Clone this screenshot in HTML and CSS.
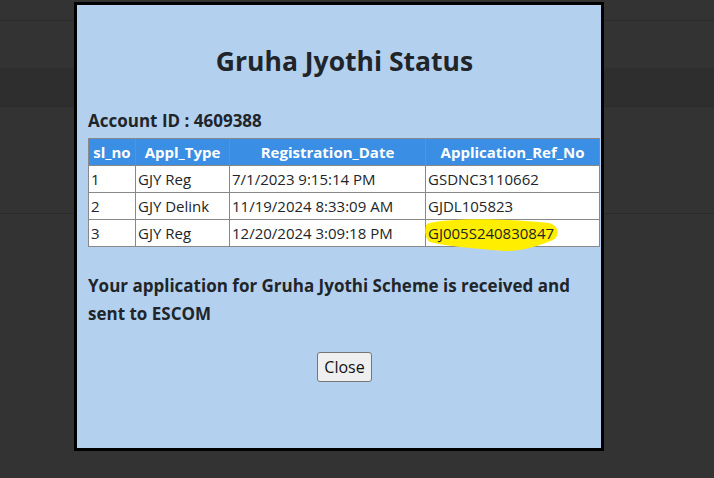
FILE: index.html
```html
<!DOCTYPE html>
<html>
<head>
<meta charset="utf-8">
<link rel="stylesheet" href="styles.css">
</head>
<body>
<div class="page">
  <div class="bar-top"></div>
  <div class="bar-nav"></div>
  <div class="bar-sub"></div>
  <div class="bar-rest"></div>
</div>
<div class="modal">
  <h2 class="title">Gruha Jyothi Status</h2>
  <h4 class="account">Account ID : 4609388</h4>
  <table class="status">
    <thead>
      <tr><th class="c1">sl_no</th><th class="c2">Appl_Type</th><th class="c3">Registration_Date</th><th class="c4">Application_Ref_No</th></tr>
    </thead>
    <tbody>
      <tr><td>1</td><td>GJY Reg</td><td>7/1/2023 9:15:14 PM</td><td>GSDNC3110662</td></tr>
      <tr><td>2</td><td>GJY Delink</td><td>11/19/2024 8:33:09 AM</td><td>GJDL105823</td></tr>
      <tr><td>3</td><td>GJY Reg</td><td>12/20/2024 3:09:18 PM</td><td class="marked"><svg class="marker" viewBox="0 0 138 34" preserveAspectRatio="none"><path d="M3 6 C20 0 80 0 125 5 C134 7 137 17 129 22 C115 28 95 34 80 33 C55 31 20 28 6 24 C1 21 0 10 3 6 Z" fill="#ffee00"/></svg><span class="ref">GJ005S240830847</span></td></tr>
    </tbody>
  </table>
  <h4 class="message">Your application for Gruha Jyothi Scheme is received and sent to ESCOM</h4>
  <div class="actions"><button class="close">Close</button></div>
</div>
</body>
</html>
```

FILE: styles.css
```css
html, body {
  margin: 0;
  padding: 0;
  background: #333333;
  font-family: "Open Sans", "Noto Sans", sans-serif;
}
.page {
  height: 478px;
  display: flex;
  flex-direction: column;
}
.bar-top {
  height: 20px;
  border-bottom: 1px solid #2b2b2b;
}
.bar-nav {
  height: 47px;
  border-bottom: 1px solid #2f2f2f;
}
.bar-sub {
  height: 37px;
  background: #2e2e2e;
  border-bottom: 1px solid #2a2a2a;
}
.bar-rest {
  height: 106px;
  border-bottom: 1px solid #2b2b2b;
}
.modal {
  position: absolute;
  left: 74px;
  top: 2px;
  width: 513px;
  height: 443px;
  border: 3px solid #000;
  background: #b3d1ef;
  padding: 0 0 0 11px;
  color: #212529;
}
.title {
  margin: 35px 0 0 0;
  text-align: center;
  font-size: 26.5px;
  line-height: 42px;
  font-weight: 700;
}
.account {
  margin: 27px 0 0 0;
  font-size: 17px;
  line-height: 24px;
  font-weight: 700;
}
.status {
  margin-top: 5px;
  width: 512px;
  border-collapse: collapse;
  font-size: 15px;
  background: #fff;
}
.status th, .status td {
  border: 1px solid #888;
  height: 26px;
  padding: 0 2px;
  text-align: left;
}
.status th {
  background: #3a8ee4;
  color: #fff;
  font-weight: 700;
  text-align: center;
  border-color: #888;
}
.c1 { width: 42px; }
.c2 { width: 89px; }
.c3 { width: 191px; }
.marked {
  position: relative;
}
.marker {
  position: absolute;
  left: -2px;
  top: -2px;
  width: 138px;
  height: 34px;
}
.ref {
  position: relative;
}
.message {
  margin: 25px 0 0 0;
  font-size: 17px;
  line-height: 28px;
  font-weight: 700;
  padding-right: 20px;
}
.actions {
  margin-top: 24px;
  text-align: center;
}
.close {
  font-family: "Open Sans", "Noto Sans", sans-serif;
  font-size: 16px;
  padding: 3px 6px;
  background: #efefef;
  border: 1px solid #767676;
  border-radius: 3px;
  color: #111;
}
```
